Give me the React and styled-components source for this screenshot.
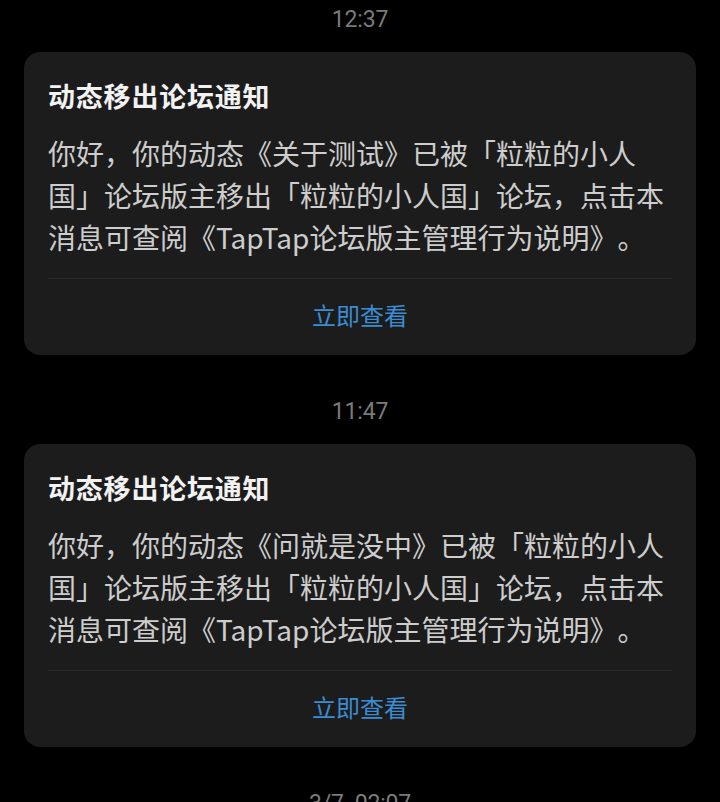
import styled, { createGlobalStyle } from 'styled-components';

const GlobalStyle = createGlobalStyle`
  html, body {
    margin: 0;
    padding: 0;
    background: #000;
  }
  body {
    font-family: "Noto Sans CJK SC", "Noto Sans", sans-serif;
    -webkit-font-smoothing: antialiased;
  }
`;

const notices = [
  { time: '12:37', post: '关于测试' },
  { time: '11:47', post: '问就是没中' },
  { time: '3/7  02:07', post: null },
];

export default function App() {
  return (
    <>
      <GlobalStyle />
      <Feed>
        {notices.map((n, i) => (
          <Group key={n.time} first={i === 0}>
            <TimeStamp>{n.time}</TimeStamp>
            {n.post && <NoticeCard post={n.post} />}
          </Group>
        ))}
      </Feed>
    </>
  );
}

function NoticeCard({ post }) {
  return (
    <Card>
      <CardBody>
        <Title>动态移出论坛通知</Title>
        <Message>
          你好，你的动态《{post}》已被「粒粒的小人国」论坛版主移出「粒粒的小人国」论坛，点击本消息可查阅《TapTap论坛版主管理行为说明》。
        </Message>
      </CardBody>
      <ActionButton type="button">立即查看</ActionButton>
    </Card>
  );
}

const Feed = styled.main`
  display: flex;
  flex-direction: column;
  padding: 0 24px;
  height: 802px;
  overflow: hidden;
`;

const Group = styled.section`
  display: flex;
  flex-direction: column;
  gap: 14px;
  margin-top: ${(p) => (p.first ? '0' : '37px')};
`;

const TimeStamp = styled.div`
  height: 38px;
  line-height: 40px;
  text-align: center;
  font-family: Roboto, "Liberation Sans", sans-serif;
  font-size: 23px;
  color: #7b7b7b;
  letter-spacing: -0.2px;
  white-space: pre;
`;

const Card = styled.article`
  background: #1c1c1c;
  border-radius: 16px;
  display: flex;
  flex-direction: column;
`;

const CardBody = styled.div`
  display: flex;
  flex-direction: column;
  gap: 18px;
  margin: 0 24px;
  padding: 26px 0 20px;
  border-bottom: 1px solid #2b2b2b;
`;

const Title = styled.h2`
  margin: 0;
  font-size: 27px;
  line-height: 36px;
  font-weight: 700;
  color: #f2f2f2;
  letter-spacing: 0.8px;
`;

const Message = styled.p`
  margin: 0;
  font-size: 28px;
  line-height: 42px;
  color: #cdcdcd;
  word-break: break-all;
  text-spacing-trim: space-all;
`;

const ActionButton = styled.button`
  all: unset;
  height: 72px;
  padding-bottom: 4px;
  line-height: 72px;
  text-align: center;
  font-family: "Noto Sans CJK SC", sans-serif;
  font-size: 24px;
  color: #3b8cd3;
  cursor: pointer;
`;
